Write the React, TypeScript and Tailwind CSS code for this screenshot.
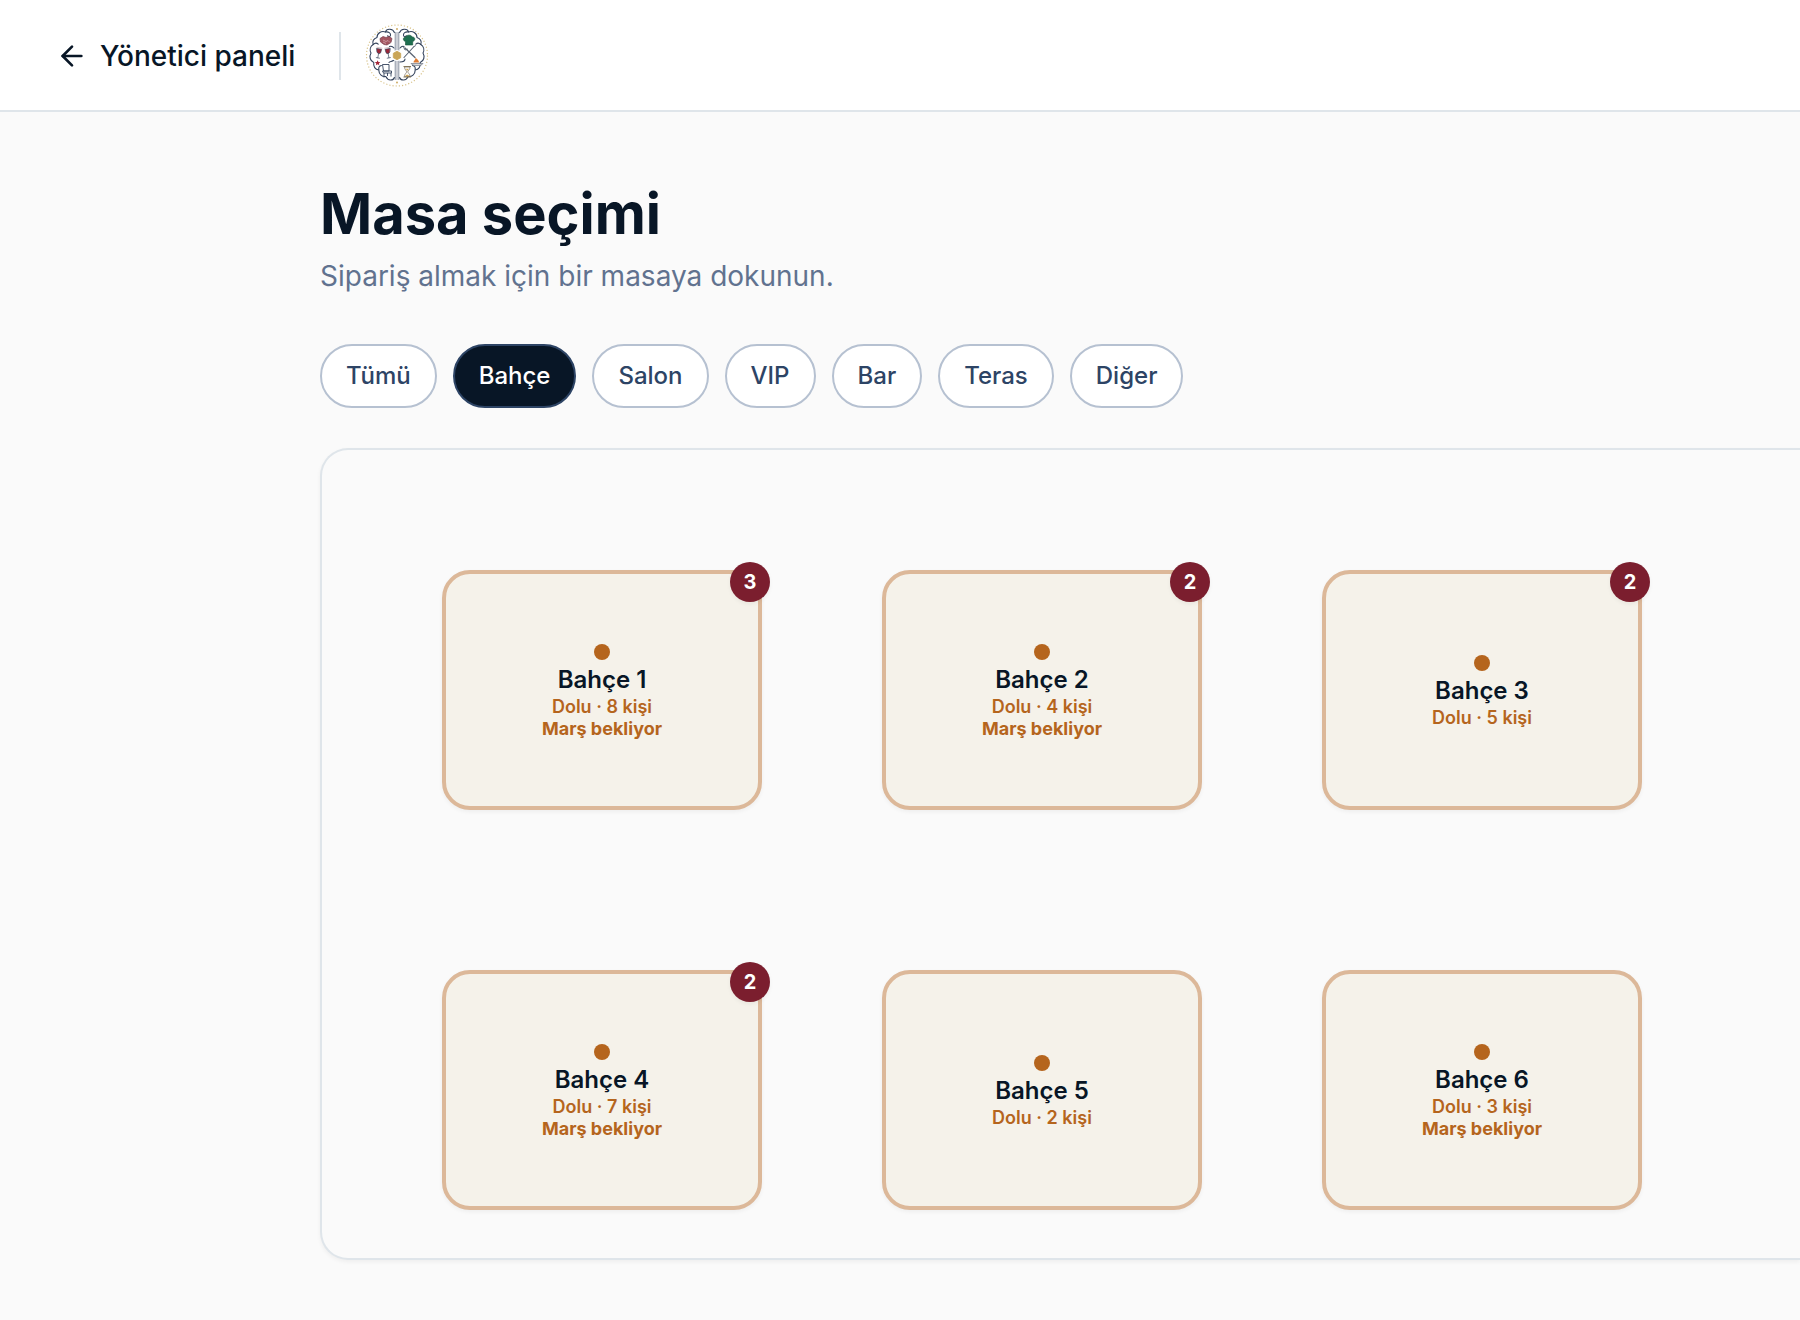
import { useState } from "react";
import { ArrowLeft } from "lucide-react";
import clsx from "clsx";

interface Table {
  name: string;
  guests: number;
  waiting?: boolean;
  badge?: number;
}

const AREAS = ["Tümü", "Bahçe", "Salon", "VIP", "Bar", "Teras", "Diğer"];

const TABLES: Table[] = [
  { name: "Bahçe 1", guests: 8, waiting: true, badge: 3 },
  { name: "Bahçe 2", guests: 4, waiting: true, badge: 2 },
  { name: "Bahçe 3", guests: 5, badge: 2 },
  { name: "Bahçe 4", guests: 7, waiting: true, badge: 2 },
  { name: "Bahçe 5", guests: 2 },
  { name: "Bahçe 6", guests: 3, waiting: true },
];

// ─── Logo ────────────────────────────────────────────────────────────────────
function BrainLogo() {
  return (
    <svg viewBox="0 0 64 64" className="size-16" fill="none" role="img" aria-label="Logo">
      <circle cx="32" cy="31.5" r="30.5" stroke="#d9c48c" strokeWidth="1.2" strokeDasharray="1.2 2" />
      <path d="M30.6 8v48M33.4 8v48" stroke="#a9afba" strokeWidth="2" />

      {/* Brain halves */}
      <g stroke="#34435c" strokeWidth="1.1" strokeLinecap="round" strokeLinejoin="round">
        <path d="M29.4 8.5C28 4.5 21.5 4 20.5 8c-4-1.500-8.500 1-8.500 5.500-3.500 1-5 4-3.800 7-3 2-3.800 5.500-2.200 8.500-2 3.500-1 8 2.800 9.500-.8 4 1.500 7 5 7.500 0 4.500 3.500 7 7 6.500 2 4.500 7.500 4.500 8.600 1" />
        <path d="M34.6 8.5C36 4.5 42.500 4 43.500 8c4-1.500 8.500 1 8.500 5.500 3.500 1 5 4 3.800 7 3 2 3.800 5.500 2.200 8.500 2 3.500 1 8-2.800 9.500.8 4-1.500 7-5 7.500 0 4.500-3.500 7-7 6.500-2 4.500-7.500 4.500-8.600 1" />
        <path d="M20.500 8c3-.5 5.500 1 5 3.500-.4 1.800-3 1.500-2.700 0M43.500 8c-3-.5-5.500 1-5 3.500.4 1.800 3 1.500 2.700 0" />
        <path d="M8.200 20.500c1.500-1.500 3.600-1.600 5-.3M55.800 20.500c-1.500-1.500-3.600-1.600-5-.3M13.800 45.500c-.3-2 .7-3.600 2.600-4M50.200 45.500c.3-2-.7-3.600-2.600-4" />
        <path d="M29 24c-2-2.500-4.500-1.500-4.500-1.500M35 24c2-2.500 4-1.500 4-1.500M29 36c-2 2-4 1-5 2.500M35 38c3 0 5-1 5-3" />
      </g>

      {/* Handshake */}
      <path d="M15 14.500l3-2 3 1 3-1 3 2-1 4-4 2.500-3-.5-3.500-2.500z" fill="#a35560" stroke="#7a3f4c" strokeWidth=".7" />
      <path d="M18 16l3 1.500 2-1 2 2M18 18l3 1.500" stroke="#e3bfc2" strokeWidth=".6" />

      {/* Chef hat */}
      <path d="M40.500 21v-3.500c-3-.8-2.800-4.500.3-4.500.8-2.500 5.500-2.500 6.400 0 3.200-.2 3.500 3.700.5 4.500V21z" fill="#1f6f50" stroke="#155039" strokeWidth=".6" />

      {/* Wine glasses */}
      <g stroke="#39465c" strokeWidth=".7" strokeLinecap="round">
        <path d="M11.800 24.500l4.800.8-.9 3.400c-1 1.500-3.200 1-3.700-.5zM24.900 24.500l-4.800.8.9 3.400c1 1.500 3.200 1 3.700-.5z" fill="#9b2638" />
        <path d="M13.600 29.500l-.8 4.200M11.300 33.600l3.200.6M23.100 29.500l.8 4.200M25.400 33.600l-3.200.6" />
        <path d="M12 23.300l5 .9M24.700 23.300l-5 .9" stroke="#c5a9b0" />
      </g>

      {/* Fork and knife */}
      <g stroke="#5a6473" strokeLinecap="round">
        <path d="M40 24l10 9.500" strokeWidth="1.3" />
        <path d="M49 22.500L39 33.500" strokeWidth="1.1" />
        <path d="M38.500 23l1.500 3 2.500-.8M49 22.500l1.500-.8" strokeWidth=".9" />
      </g>

      <path d="M12.600 36.200l.8 1.700 1.900.2-1.400 1.300.4 1.900-1.700-1-1.700 1 .4-1.900-1.400-1.300 1.900-.2z" fill="#a32638" />

      {/* Flaming dish */}
      <path d="M46 39.500h12c-1 1.800-3 2-6 2s-5-.2-6-2z" fill="#d8dadd" stroke="#5a6473" strokeWidth=".6" />
      <path d="M48.500 38.500c0-2 1.800-2 2-4.500 1.900 1 3.500 2.500 3.500 4.500z" fill="#df7b32" />

      {/* Chair */}
      <path d="M17.500 40.500h6.500v6.500h-5.500zM17.500 47h9v2h-8zM19 49v4.500M26 49v3.500M22.500 49v3" stroke="#34435c" strokeWidth=".9" />

      {/* Hourglass */}
      <path d="M38.500 42.500h7.500M38.500 53h7.500" stroke="#8b7c5a" strokeWidth="1.2" />
      <path d="M39.500 43c0 2.800 2.200 3.600 2.200 4.800s-2.200 2-2.200 4.700h5.500c0-2.700-2.200-3.500-2.200-4.700S45 45.800 45 43z" stroke="#776d5c" strokeWidth=".7" />
      <path d="M40.500 52.200c.4-1.800 3.100-1.800 3.500 0zM40.800 44.800h3l-1.500 2z" fill="#d3a650" />

      {/* Center medallion */}
      <circle cx="32" cy="31.5" r="5.600" fill="#fff" />
      <path d="M32 27.200l3.700 2.100v4.400L32 35.800l-3.700-2.100v-4.400z" fill="#c9a557" stroke="#c9a557" strokeWidth=".8" strokeLinejoin="round" />
      <circle cx="32" cy="5" r=".9" fill="#c9a557" />
      <circle cx="32" cy="58.5" r=".9" fill="#c9a557" />
    </svg>
  );
}

// ─── TableCard ───────────────────────────────────────────────────────────────
function TableCard({ name, guests, waiting, badge }: Table) {
  return (
    <button
      type="button"
      className="relative flex h-60 flex-col items-center justify-center rounded-[28px] border-4 border-[#dcb899] bg-[#f5f2ea] pt-0.5 shadow-[0_2px_4px_rgba(0,0,0,0.05)]"
    >
      <span className="mb-1.5 size-4 rounded-full bg-[#b5651d]" />
      <span className="text-2xl leading-7 font-semibold text-[#081626]">{name}</span>
      <span className="mt-1 text-lg leading-[18px] font-semibold text-[#b5651d]">Dolu · {guests} kişi</span>
      {waiting && <span className="mt-1 text-lg leading-[18px] font-bold text-[#b5651d]">Marş bekliyor</span>}
      {badge && (
        <span className="absolute -top-3 -right-3 flex size-10 items-center justify-center rounded-full bg-[#7b1e2e] text-xl font-bold text-white shadow-[0_2px_4px_rgba(0,0,0,0.05)]">
          {badge}
        </span>
      )}
    </button>
  );
}

export default function App() {
  const [area, setArea] = useState("Bahçe");

  return (
    <div className="min-h-screen bg-[#fafafa] font-['Inter',sans-serif] text-[#081626]">
      <header className="flex h-28 items-center gap-6 border-b-2 border-[#dfe5ea] bg-white px-8 pt-0.5">
        <a href="#" className="flex items-center gap-3 pr-5 pl-6 text-[28px] leading-8 font-medium">
          <ArrowLeft className="size-8" />
          Yönetici paneli
        </a>
        <span className="h-12 w-0.5 bg-[#dfe5ea]" />
        <BrainLogo />
      </header>

      <main className="pt-16 pb-[60px] pl-80">
        <h1 className="text-[56px] leading-[76px] font-bold">Masa seçimi</h1>
        <p className="mt-1 text-[28px] leading-10 text-[#61728f]">Sipariş almak için bir masaya dokunun.</p>

        <div className="mt-12 flex flex-wrap gap-4">
          {AREAS.map((item) => (
            <button
              key={item}
              type="button"
              aria-pressed={item === area}
              onClick={() => setArea(item)}
              className={clsx(
                "h-16 rounded-full border-2 px-6 text-2xl font-medium",
                item === area
                  ? "border-[#2d4465] bg-[#081626] text-white"
                  : "border-[#b6c1d1] bg-white text-[#2d4465]"
              )}
            >
              {item}
            </button>
          ))}
        </div>

        {/* Floor plan runs off the right edge */}
        <section className="mt-10 grid grid-cols-[repeat(auto-fill,320px)] gap-x-[120px] gap-y-40 rounded-l-[28px] border-2 border-r-0 border-[#dfe5ea] bg-[#fafafa] pt-[120px] pb-12 pl-[120px] shadow-[0_2px_4px_rgba(0,0,0,0.05)]">
          {TABLES.map((table) => (
            <TableCard key={table.name} {...table} />
          ))}
        </section>
      </main>
    </div>
  );
}
